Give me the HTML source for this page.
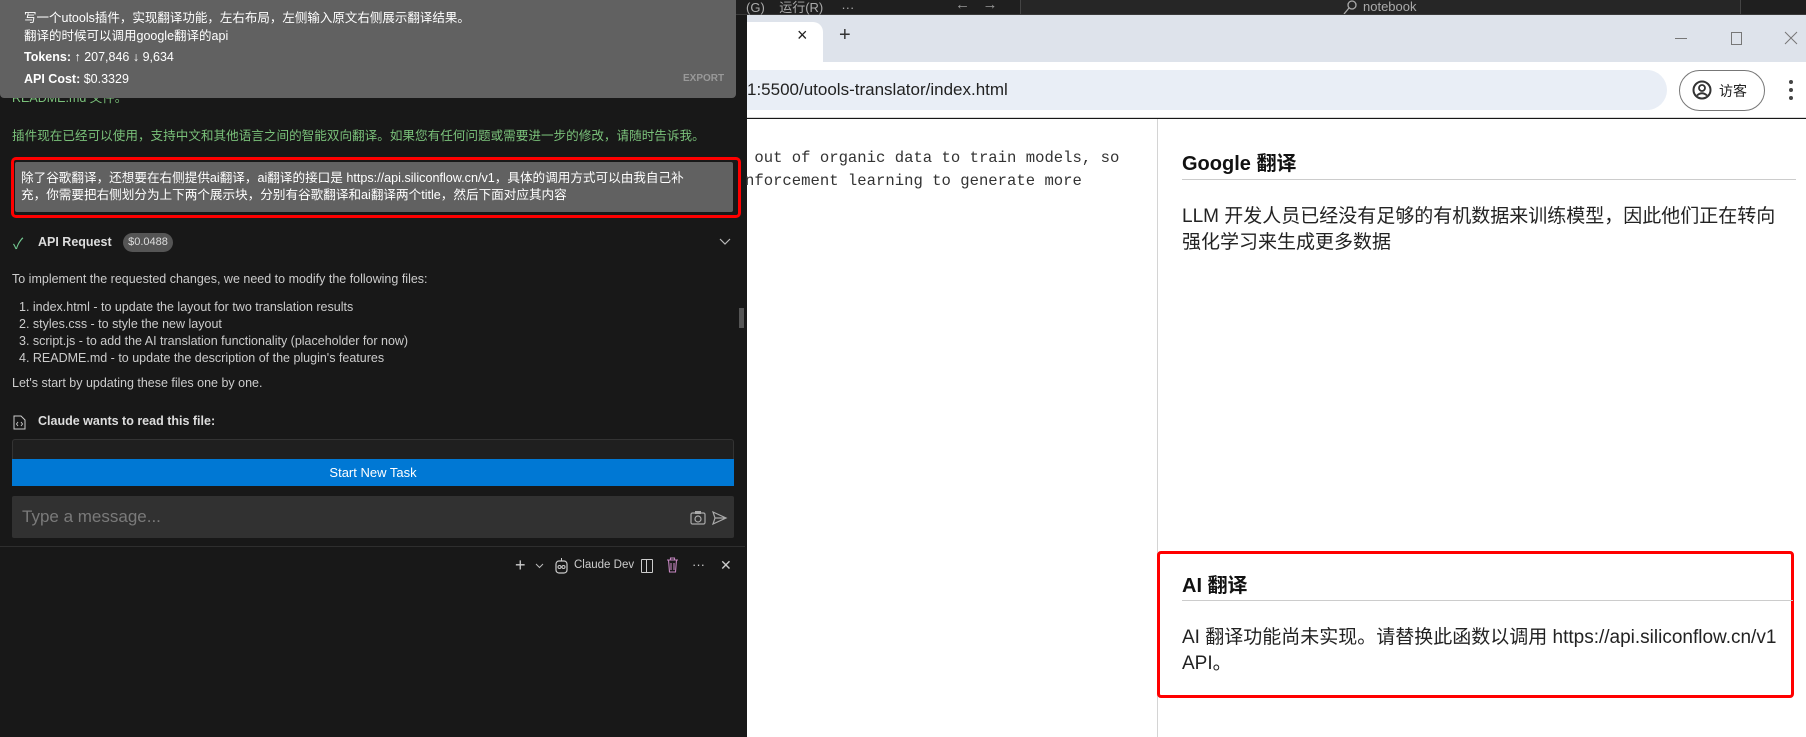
<!DOCTYPE html>
<html><head><meta charset="utf-8"><style>
*{margin:0;padding:0;box-sizing:border-box}
body{width:1806px;height:737px;overflow:hidden;background:#181818;font-family:"Liberation Sans","Noto Sans CJK SC",sans-serif;position:relative}
.a{position:absolute;white-space:nowrap}
.lp{color:#cccccc;font-size:12.5px}
</style></head><body>
<!-- title bar -->
<div class="a" style="left:736px;top:0;width:1070px;height:15px;background:#1f1f1f;border-bottom:1px solid #3a3a3a"></div>
<div class="a" style="left:1020px;top:0;width:721px;height:14px;background:#262626;border-left:1px solid #444;border-right:1px solid #444"></div>
<div class="a" style="left:746px;top:-3px;color:#aaa;font-size:13px">(G)&nbsp;&nbsp;&nbsp;&nbsp;运行(R)&nbsp;&nbsp;&nbsp;&nbsp;&nbsp;···</div>
<div class="a" style="left:955px;top:-4px;color:#999;font-size:15px">←&nbsp;&nbsp;&nbsp;→</div>
<svg class="a" style="left:1342px;top:0" width="16" height="14"><circle cx="10" cy="5" r="4" fill="none" stroke="#aaa" stroke-width="1.3"/><path d="M7 8 L2 14" stroke="#aaa" stroke-width="1.3"/></svg>
<div class="a" style="left:1363px;top:-1px;color:#aaa;font-size:13px">notebook</div>
<!-- browser -->
<div class="a" style="left:747px;top:15px;width:1059px;height:47px;background:#dee3eb"></div>
<div class="a" style="left:747px;top:22px;width:76px;height:44px;background:#fff;border-radius:0 10px 0 0"></div>
<div class="a" style="left:797px;top:25px;font-size:18px;color:#222">×</div>
<div class="a" style="left:839px;top:24px;font-size:20px;color:#333">+</div>
<div class="a" style="left:1675px;top:38px;width:12px;height:1px;background:#777"></div>
<div class="a" style="left:1731px;top:32px;width:11px;height:13px;border:1px solid #777"></div>
<svg class="a" style="left:1784px;top:31px" width="14" height="14"><path d="M1 1 L13 13 M13 1 L1 13" stroke="#777" stroke-width="1"/></svg>
<div class="a" style="left:747px;top:62px;width:1059px;height:56px;background:#fff;border-bottom:1px solid #d8d8d8"></div>
<div class="a" style="left:747px;top:70px;width:920px;height:40px;background:#e9eef6;border-radius:0 20px 20px 0"></div>
<div class="a" style="left:747px;top:80px;font-size:17px;color:#222">1:5500/utools-translator/index.html</div>
<div class="a" style="left:1679px;top:70px;width:86px;height:41px;border:1px solid #777;border-radius:21px"></div>
<svg class="a" style="left:1692px;top:80px" width="20" height="20"><circle cx="10" cy="10" r="8.5" fill="none" stroke="#333" stroke-width="2"/><circle cx="10" cy="8" r="3" fill="none" stroke="#333" stroke-width="1.8"/><path d="M5 15.5 Q10 11 15 15.5" fill="none" stroke="#333" stroke-width="1.8"/></svg>
<div class="a" style="left:1719px;top:81px;font-size:14px;color:#222">访客</div>
<div class="a" style="left:1789px;top:80px;width:4px;height:4px;border-radius:2px;background:#444;box-shadow:0 8px 0 #444,0 16px 0 #444"></div>
<div class="a" style="left:747px;top:119px;width:1059px;height:618px;background:#fff"></div>
<div class="a" style="left:1157px;top:119px;width:1px;height:618px;background:#d4d4d4"></div>
<div class="a" style="left:745px;top:147px;font-family:'Liberation Mono',monospace;font-size:15.6px;color:#333;line-height:23px">&nbsp;out of organic data to train models, so<br>nforcement learning to generate more</div>
<div class="a" style="left:1182px;top:147px;font-size:20px;font-weight:bold;color:#111">Google 翻译</div>
<div class="a" style="left:1182px;top:179px;width:614px;height:1px;background:#ccc"></div>
<div class="a" style="left:1182px;top:204px;font-size:19px;color:#222;line-height:26px">LLM 开发人员已经没有足够的有机数据来训练模型，因此他们正在转向<br>强化学习来生成更多数据</div>
<div class="a" style="left:1157px;top:551px;width:637px;height:147px;border:3px solid #f00;border-radius:4px"></div>
<div class="a" style="left:1182px;top:569px;font-size:20px;font-weight:bold;color:#111">AI 翻译</div>
<div class="a" style="left:1182px;top:600px;width:611px;height:1px;background:#ccc"></div>
<div class="a" style="left:1182px;top:625px;font-size:19px;color:#222;line-height:26px">AI 翻译功能尚未实现。请替换此函数以调用 https://api.siliconflow.cn/v1<br>API。</div>
<!-- left panel -->
<div class="a" style="left:12px;top:97px;font-size:12.5px;color:#7ac17a;height:11px;overflow:hidden;line-height:20px"><span style="position:relative;top:-9px">README.md 文件。</span></div>
<div class="a" style="left:0;top:0;width:736px;height:98px;background:#616161;border-radius:0 0 4px 4px"></div>
<div class="a" style="left:24px;top:9px;font-size:12.5px;color:#fff;line-height:18px">写一个utools插件，实现翻译功能，左右布局，左侧输入原文右侧展示翻译结果。<br>翻译的时候可以调用google翻译的api</div>
<div class="a" style="left:24px;top:50px;font-size:12.5px;color:#fff"><b>Tokens:</b> ↑ 207,846 ↓ 9,634</div>
<div class="a" style="left:24px;top:72px;font-size:12.5px;color:#fff"><b>API Cost:</b> $0.3329</div>
<div class="a" style="left:683px;top:73px;font-size:10px;color:#999;font-weight:bold">EXPORT</div>
<div class="a" style="left:12px;top:125px;font-size:12.6px;color:#7ac17a">插件现在已经可以使用，支持中文和其他语言之间的智能双向翻译。如果您有任何问题或需要进一步的修改，请随时告诉我。</div>
<div class="a" style="left:11px;top:157px;width:730px;height:61px;border:3px solid #f00;border-radius:5px"></div>
<div class="a" style="left:15px;top:162px;width:718px;height:50px;background:#616161;border-radius:2px"></div>
<div class="a" style="left:21px;top:170px;font-size:12.6px;color:#fff;line-height:17px">除了谷歌翻译，还想要在右侧提供ai翻译，ai翻译的接口是 https://api.siliconflow.cn/v1，具体的调用方式可以由我自己补<br>充，你需要把右侧划分为上下两个展示块，分别有谷歌翻译和ai翻译两个title，然后下面对应其内容</div>
<div class="a" style="left:13px;top:233px;font-size:15px;color:#73c991">✓</div>
<div class="a" style="left:38px;top:235px;font-size:12.5px;color:#ddd;font-weight:bold">API Request</div>
<div class="a" style="left:123px;top:233px;width:50px;height:19px;background:#555;border-radius:10px;color:#ddd;font-size:11px;text-align:center;line-height:19px">$0.0488</div>
<svg class="a" style="left:719px;top:238px" width="12" height="8"><path d="M1 1 L6 6 L11 1" fill="none" stroke="#bbb" stroke-width="1.2"/></svg>
<div class="a lp" style="left:12px;top:272px">To implement the requested changes, we need to modify the following files:</div>
<div class="a lp" style="left:19px;top:299px;line-height:17px">1. index.html - to update the layout for two translation results<br>2. styles.css - to style the new layout<br>3. script.js - to add the AI translation functionality (placeholder for now)<br>4. README.md - to update the description of the plugin's features</div>
<div class="a lp" style="left:12px;top:376px">Let's start by updating these files one by one.</div>
<svg class="a" style="left:13px;top:415px" width="13" height="15"><path d="M1 1 H8 L12 5 V14 H1 Z" fill="none" stroke="#ccc"/><path d="M5 7 L3.5 9 L5 11 M8 7 L9.5 9 L8 11" fill="none" stroke="#ccc" stroke-width=".9"/></svg>
<div class="a" style="left:38px;top:414px;font-size:12.5px;color:#ddd;font-weight:bold">Claude wants to read this file:</div>
<div class="a" style="left:12px;top:439px;width:722px;height:20px;background:#1f1f1f;border:1px solid #333;border-bottom:none;border-radius:3px 3px 0 0"></div>
<div class="a" style="left:739px;top:308px;width:5px;height:20px;background:#555"></div>
<div class="a" style="left:12px;top:459px;width:722px;height:27px;background:#0078d4;color:#fff;font-size:13px;text-align:center;line-height:27px">Start New Task</div>
<div class="a" style="left:12px;top:496px;width:722px;height:42px;background:#313131;border-radius:2px"></div>
<div class="a" style="left:22px;top:507px;font-size:17px;color:#7a7a7a">Type a message...</div>
<svg class="a" style="left:690px;top:510px" width="40" height="16"><rect x="1" y="3" width="14" height="11" rx="1.5" fill="none" stroke="#aaa" stroke-width="1.2"/><rect x="5" y="1" width="6" height="3" fill="#aaa"/><circle cx="8" cy="9" r="3" fill="none" stroke="#aaa" stroke-width="1.2"/><path d="M23 2 L36 8 L23 14 L25 8 Z M25 8 H36" fill="none" stroke="#aaa" stroke-width="1.2"/></svg>
<div class="a" style="left:0;top:546px;width:745px;height:1px;background:#2e2e2e"></div>
<div class="a" style="left:515px;top:555px;font-size:18px;color:#ccc">+</div>
<svg class="a" style="left:535px;top:563px" width="9" height="6"><path d="M1 1 L4.5 4.5 L8 1" fill="none" stroke="#bbb"/></svg>
<svg class="a" style="left:554px;top:557px" width="15" height="18"><rect x="2" y="4" width="11" height="12" rx="3" fill="none" stroke="#ccc" stroke-width="1.2"/><circle cx="5.5" cy="10" r="1.5" fill="none" stroke="#ccc"/><circle cx="9.5" cy="10" r="1.5" fill="none" stroke="#ccc"/><path d="M7.5 1 V4" stroke="#ccc"/></svg>
<div class="a" style="left:574px;top:559px;font-size:11.5px;color:#ccc">Claude Dev</div>
<div class="a" style="left:641px;top:559px;width:12px;height:14px;border:1.2px solid #ccc;border-radius:1px"></div>
<div class="a" style="left:646px;top:559px;width:1px;height:14px;background:#ccc"></div>
<svg class="a" style="left:666px;top:557px" width="13" height="16"><path d="M1 3 H12 M4.5 3 V1 H8.5 V3 M2.5 3 L3.5 15 H9.5 L10.5 3 M5 6 V13 M8 6 V13" fill="none" stroke="#c586c0" stroke-width="1.1"/></svg>
<div class="a" style="left:692px;top:557px;font-size:13px;color:#ccc">···</div>
<div class="a" style="left:720px;top:557px;font-size:14px;color:#ccc">✕</div>
</body></html>
